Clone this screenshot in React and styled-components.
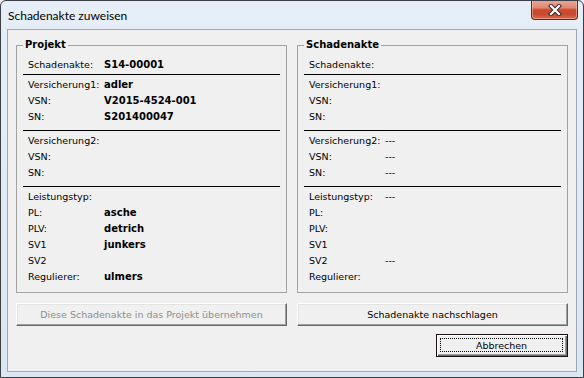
import React from "react";
import styled, { createGlobalStyle } from "styled-components";

const GlobalStyle = createGlobalStyle`
  html, body { margin: 0; padding: 0; background: #f0f0f0; }
  * { box-sizing: border-box; }
`;

const Window = styled.div`
  width: 584px;
  height: 378px;
  border: 1px solid #3b3f45;
  border-radius: 6px 6px 0 0;
  background: linear-gradient(180deg, #e6eef8 0%, #dbe6f3 100%);
  display: flex;
  flex-direction: column;
  overflow: hidden;
`;

const TitleBar = styled.div`
  height: 28px;
  display: flex;
  align-items: flex-start;
  padding-left: 7px;
  flex: none;
`;

const Title = styled.div`
  font-family: Lato, "Noto Sans", sans-serif;
  font-size: 12px;
  line-height: 16px;
  margin-top: 7px;
  color: #000;
`;

const CloseButton = styled.div`
  margin-left: auto;
  margin-right: 5px;
  margin-top: -1px;
  width: 47px;
  height: 20px;
  border: 1px solid #5e2a20;
  border-top: none;
  border-radius: 0 0 4px 4px;
  background: linear-gradient(180deg, #eba898 0%, #e08a74 40%, #cc4a2f 52%, #c94a2f 75%, #d86b50 100%);
  box-shadow: inset 0 0 0 1px rgba(255, 215, 205, 0.45);
  display: flex;
  align-items: center;
  justify-content: center;
`;

const Client = styled.div`
  flex: 1;
  margin: 0 6px 5px 6px;
  border: 1px solid #9ea8b4;
  background: #f0f0f0;
  padding: 8px 8px 0 8px;
  font-family: "DejaVu Sans", sans-serif;
  font-size: 9.5px;
  color: #000;
`;

const Columns = styled.div`
  display: grid;
  grid-template-columns: 271px 271px;
  column-gap: 10px;
`;

const Group = styled.fieldset`
  margin: 0;
  min-width: 0;
  height: 255px;
  border: 1px solid #a2a2a2;
  padding: 0 6px 0 6px;
`;

const Legend = styled.legend`
  font-weight: bold;
  font-size: 10px;
  line-height: 14px;
  padding: 0 2px;
  margin: 0;
`;

const Section = styled.div`
  padding-top: ${(p) => p.$pt}px;
  padding-bottom: ${(p) => p.$pb}px;
  border-bottom: ${(p) => (p.$rule ? "1px solid #000" : "none")};
`;

const Row = styled.div`
  display: grid;
  grid-template-columns: 76px 1fr;
  height: 16px;
  line-height: 16px;
  padding-left: 5px;
  white-space: nowrap;
`;

const Value = styled.span`
  font-weight: ${(p) => (p.$bold ? "bold" : "normal")};
  font-size: ${(p) => (p.$bold ? "10px" : "9.5px")};
`;

const ButtonRow = styled.div`
  display: grid;
  grid-template-columns: 271px 271px;
  column-gap: 10px;
  margin-top: 10px;
`;

const Button = styled.div`
  height: 23px;
  background: #f0f0f0;
  border-top: 1px solid #ffffff;
  border-left: 1px solid #ffffff;
  border-right: 1px solid #696969;
  border-bottom: 1px solid #696969;
  box-shadow: inset -1px -1px 0 #a0a0a0, inset 1px 1px 0 #e3e3e3;
  display: flex;
  align-items: center;
  justify-content: center;
  color: ${(p) => (p.$disabled ? "#8d8d8d" : "#000")};
`;

const FooterRow = styled.div`
  display: flex;
  justify-content: flex-end;
  margin-top: 8px;
`;

const DefaultButton = styled.div`
  width: 132px;
  height: 23px;
  border: 1px solid #1a1010;
  background: #f0f0f0;
  padding: 1px;
  box-shadow: inset 1px 1px 0 #ffffff, inset -1px -1px 0 #696969, inset -2px -2px 0 #a0a0a0;
  display: flex;
`;

const FocusRect = styled.div`
  flex: 1;
  margin: 2px 3px 3px 2px;
  border: 1px dotted #000;
  display: flex;
  align-items: center;
  justify-content: center;
`;

const projekt = [
  { pt: 5, pb: 1, rule: true, rows: [["Schadenakte:", "S14-00001"]] },
  {
    pt: 2,
    pb: 5,
    rule: true,
    rows: [
      ["Versicherung1:", "adler"],
      ["VSN:", "V2015-4524-001"],
      ["SN:", "S201400047"],
    ],
  },
  {
    pt: 2,
    pb: 5,
    rule: true,
    rows: [
      ["Versicherung2:", ""],
      ["VSN:", ""],
      ["SN:", ""],
    ],
  },
  {
    pt: 2,
    pb: 0,
    rule: false,
    rows: [
      ["Leistungstyp:", ""],
      ["PL:", "asche"],
      ["PLV:", "detrich"],
      ["SV1", "junkers"],
      ["SV2", ""],
      ["Regulierer:", "ulmers"],
    ],
  },
];

const akte = [
  { pt: 5, pb: 1, rule: true, rows: [["Schadenakte:", ""]] },
  {
    pt: 2,
    pb: 5,
    rule: true,
    rows: [
      ["Versicherung1:", ""],
      ["VSN:", ""],
      ["SN:", ""],
    ],
  },
  {
    pt: 2,
    pb: 5,
    rule: true,
    rows: [
      ["Versicherung2:", "---"],
      ["VSN:", "---"],
      ["SN:", "---"],
    ],
  },
  {
    pt: 2,
    pb: 0,
    rule: false,
    rows: [
      ["Leistungstyp:", "---"],
      ["PL:", ""],
      ["PLV:", ""],
      ["SV1", ""],
      ["SV2", "---"],
      ["Regulierer:", ""],
    ],
  },
];

function InfoGroup({ title, sections, bold }) {
  return (
    <Group>
      <Legend>{title}</Legend>
      {sections.map((s, i) => (
        <Section key={i} $pt={s.pt} $pb={s.pb} $rule={s.rule}>
          {s.rows.map(([label, value], j) => (
            <Row key={j}>
              <span>{label}</span>
              <Value $bold={bold}>{value}</Value>
            </Row>
          ))}
        </Section>
      ))}
    </Group>
  );
}

export default function App() {
  return (
    <>
      <GlobalStyle />
      <Window>
        <TitleBar>
          <Title>Schadenakte zuweisen</Title>
          <CloseButton>
            <svg width="14" height="12" viewBox="0 0 14 12">
              <path d="M3 2 L11 10 M11 2 L3 10" stroke="#3a2a2a" strokeWidth="4.2" strokeLinecap="square" fill="none" />
              <path d="M3 2 L11 10 M11 2 L3 10" stroke="#ffffff" strokeWidth="2.2" strokeLinecap="square" fill="none" />
            </svg>
          </CloseButton>
        </TitleBar>
        <Client>
          <Columns>
            <InfoGroup title="Projekt" sections={projekt} bold />
            <InfoGroup title="Schadenakte" sections={akte} />
          </Columns>
          <ButtonRow>
            <Button $disabled>Diese Schadenakte in das Projekt übernehmen</Button>
            <Button>Schadenakte nachschlagen</Button>
          </ButtonRow>
          <FooterRow>
            <DefaultButton>
              <FocusRect>Abbrechen</FocusRect>
            </DefaultButton>
          </FooterRow>
        </Client>
      </Window>
    </>
  );
}
